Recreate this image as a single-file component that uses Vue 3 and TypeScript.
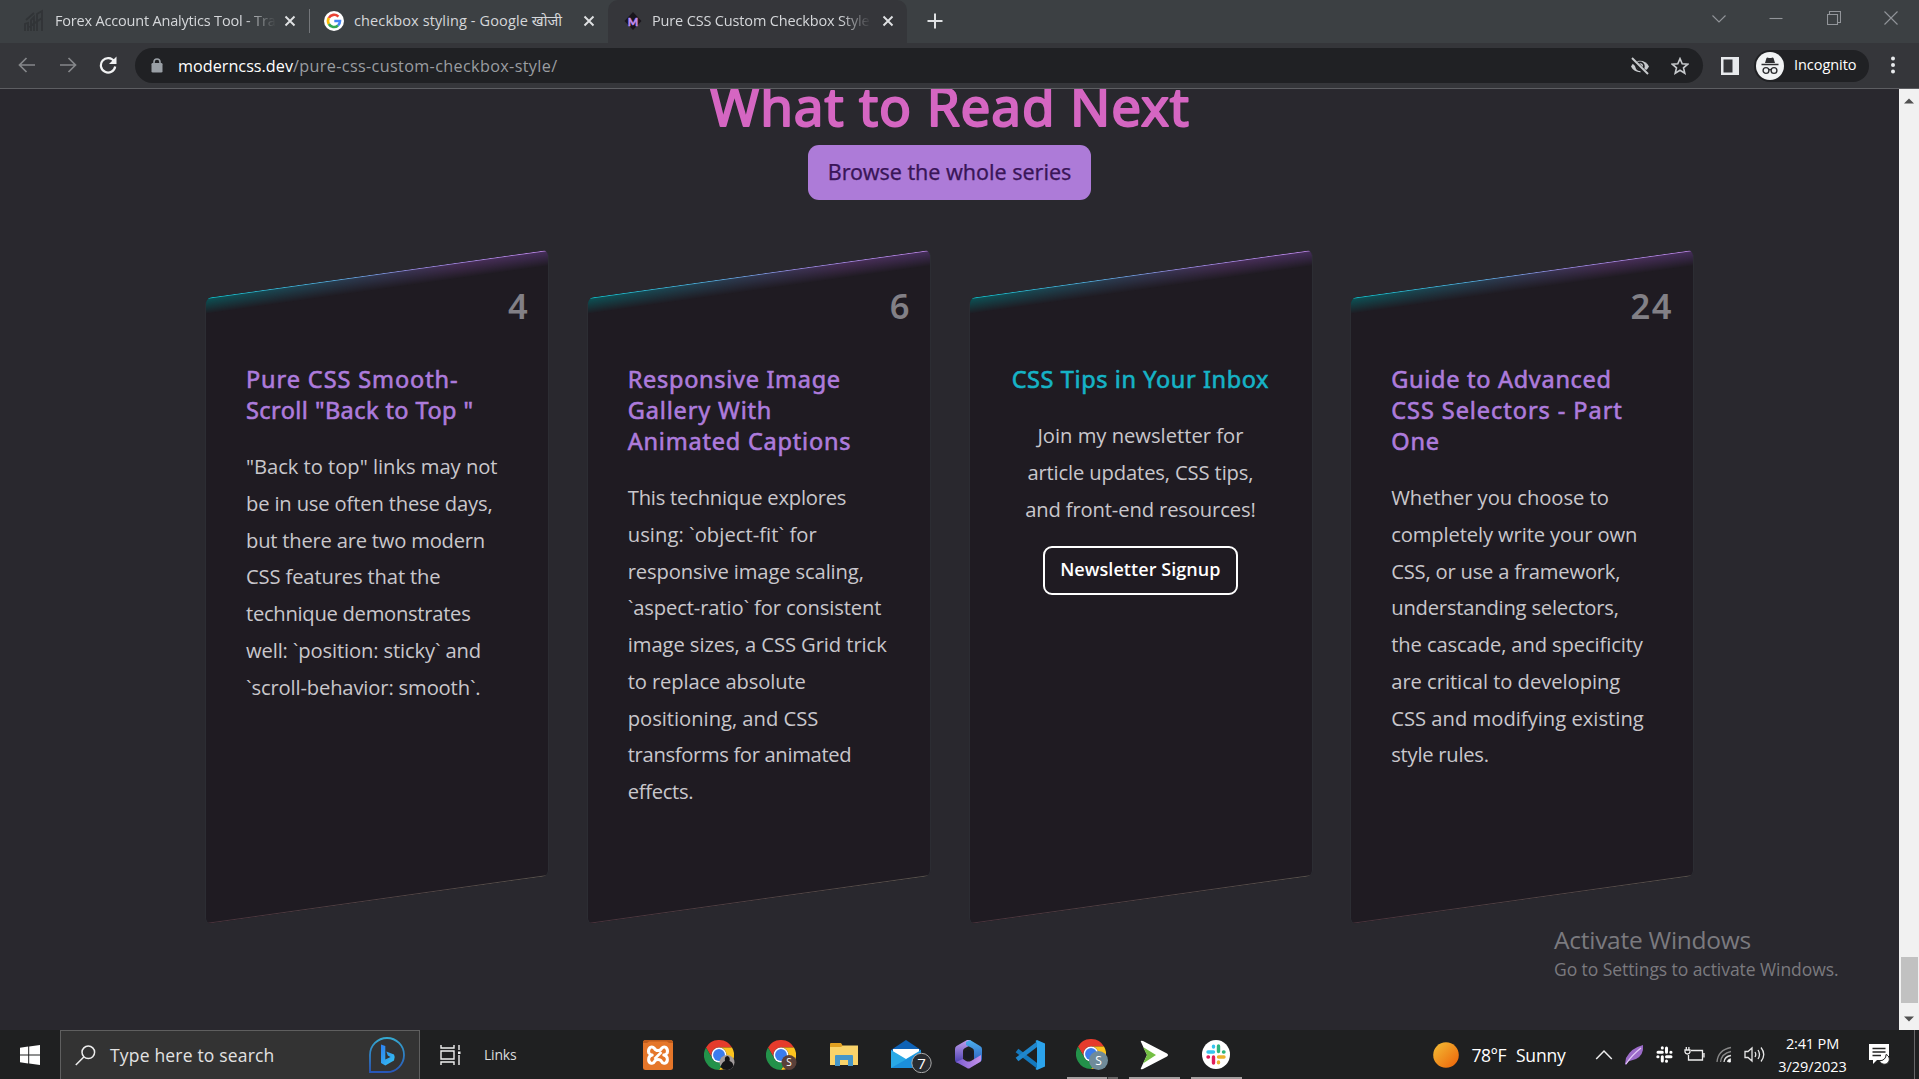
<script setup lang="ts">
interface Line { t: string; w: number }
interface Card { num?: string; numW?: number; title: Line[]; body: Line[]; promo?: boolean }

// Tracks a single line of text so that it spans the requested number of pixels.
const vFit = {
  mounted(el: HTMLElement, binding: { value: number }) {
    const count = (el.textContent || '').trim().length
    const natural = el.getBoundingClientRect().width
    if (count > 1) el.style.letterSpacing = ((binding.value + 1.5 - natural) / count).toFixed(3) + 'px'
  },
}

const cards: Card[] = [
  {
    num: '4', numW: 22,
    title: [{ t: 'Pure CSS Smooth-', w: 211 }, { t: 'Scroll "Back to Top "', w: 226 }],
    body: [
      { t: '"Back to top" links may not', w: 250 }, { t: 'be in use often these days,', w: 245 },
      { t: 'but there are two modern', w: 237.5 }, { t: 'CSS features that the', w: 193 },
      { t: 'technique demonstrates', w: 223 }, { t: 'well: `position: sticky` and', w: 233.5 },
      { t: '`scroll-behavior: smooth`.', w: 233 },
    ],
  },
  {
    num: '6', numW: 22,
    title: [{ t: 'Responsive Image', w: 211.5 }, { t: 'Gallery With', w: 143 }, { t: 'Animated Captions', w: 222 }],
    body: [
      { t: 'This technique explores', w: 217 }, { t: 'using: `object-fit` for', w: 187.5 },
      { t: 'responsive image scaling,', w: 234.5 }, { t: '`aspect-ratio` for consistent', w: 252 },
      { t: 'image sizes, a CSS Grid trick', w: 257.5 }, { t: 'to replace absolute', w: 176.5 },
      { t: 'positioning, and CSS', w: 189 }, { t: 'transforms for animated', w: 222 }, { t: 'effects.', w: 64 },
    ],
  },
  {
    promo: true,
    title: [{ t: 'CSS Tips in Your Inbox', w: 256 }],
    body: [
      { t: 'Join my newsletter for', w: 204.5 }, { t: 'article updates, CSS tips,', w: 224.5 },
      { t: 'and front-end resources!', w: 229 },
    ],
  },
  {
    num: '24', numW: 41,
    title: [{ t: 'Guide to Advanced', w: 219 }, { t: 'CSS Selectors - Part', w: 230 }, { t: 'One', w: 47 }],
    body: [
      { t: 'Whether you choose to', w: 216 }, { t: 'completely write your own', w: 244.5 },
      { t: 'CSS, or use a framework,', w: 227.5 }, { t: 'understanding selectors,', w: 226 },
      { t: 'the cascade, and specificity', w: 250 }, { t: 'are critical to developing', w: 227.5 },
      { t: 'CSS and modifying existing', w: 251 }, { t: 'style rules.', w: 96 },
    ],
  },
]
</script>

<template>
  <div class="screen">
    <svg class="defs" width="0" height="0">
      <defs>
        <symbol id="chrome" viewBox="0 0 48 48">
          <path fill="#e53b2c" d="M24 12H44.8A24 24 0 0 0 3.2 12L13.6 30A12 12 0 0 1 24 12Z" />
          <path fill="#fcc31e" d="M34.4 30L24 48A24 24 0 0 0 44.8 12H24A12 12 0 0 1 34.4 30Z" />
          <path fill="#23924a" d="M13.6 30L3.2 12A24 24 0 0 0 24 48L34.4 30A12 12 0 0 1 13.6 30Z" />
          <circle cx="24" cy="24" r="12" fill="#fff" /><circle cx="24" cy="24" r="9.5" fill="#3a7cec" />
        </symbol>
        <symbol id="cross" viewBox="0 0 12 12"><path d="M1.5 1.5L10.5 10.5M10.5 1.5L1.5 10.5" stroke="#dfe1e3" stroke-width="1.9" fill="none" /></symbol>
        <linearGradient id="bing" x1="0" y1="0" x2="0" y2="1"><stop offset="0" stop-color="#35a8cf" /><stop offset="1" stop-color="#2856b8" /></linearGradient>
        <linearGradient id="bingb" x1="0" y1="0" x2="1" y2="1"><stop offset="0" stop-color="#2d7ff0" /><stop offset="1" stop-color="#35c5f0" /></linearGradient>
        <linearGradient id="sun" x1="0" y1="0" x2="1" y2="1"><stop offset="0.1" stop-color="#f2b632" /><stop offset="0.9" stop-color="#ee6a0c" /></linearGradient>
        <linearGradient id="m1" x1="0" y1="0" x2="0" y2="1"><stop offset="0" stop-color="#c3a0ee" /><stop offset="1" stop-color="#4a3fb0" /></linearGradient>
        <linearGradient id="m2" x1="0" y1="0" x2="0" y2="1"><stop offset="0" stop-color="#4bb0ee" /><stop offset="1" stop-color="#2c55b8" /></linearGradient>
        <linearGradient id="m3" x1="0" y1="0" x2="1" y2="0"><stop offset="0" stop-color="#7a5cd0" /><stop offset="1" stop-color="#c692ea" /></linearGradient>
      </defs>
    </svg>

    <header class="tabs">
      <div class="tab first">
        <svg class="fav1" width="20" height="24" viewBox="0 0 20 24"><path d="M1 22V15L4 14V22M7 22V11L10 8V22M13 22V5L18 2V22M2 11L10 4M5 18L18 9" stroke="#313437" stroke-width="1.800" fill="none" /></svg>
        <div class="label fade1"><span v-fit="219" class="fit">Forex Account Analytics Tool - Tra</span></div>
        <svg width="12" height="12" class="x"><use href="#cross" /></svg>
      </div>
      <i class="sep"></i>
      <div class="tab second">
        <svg width="20" height="20" viewBox="0 0 20 20"><circle cx="10" cy="10" r="10" fill="#fff" />
          <g fill="none" stroke-width="2.6"><path d="M14.4 5.6A6 6 0 0 0 4.8 7" stroke="#ea4335" /><path d="M4.8 7A6 6 0 0 0 4.8 13" stroke="#fbbc05" /><path d="M4.8 13A6 6 0 0 0 14 14.5" stroke="#34a853" /><path d="M14 14.5A6 6 0 0 0 16 10H10.3" stroke="#4285f4" /></g></svg>
        <div class="label l2"><span v-fit="207" class="fit">checkbox styling - Google खोजी</span></div>
        <svg width="12" height="12" class="x"><use href="#cross" /></svg>
      </div>
      <div class="tab active">
        <div class="mfav"><svg width="18" height="20" viewBox="0 0 18 20"><path d="M9 1L17.5 10L9 19L.5 10Z" fill="#18151c" /></svg><b>M</b></div>
        <div class="label fade3"><span v-fit="216" class="fit">Pure CSS Custom Checkbox Style</span></div>
        <svg width="12" height="12" class="x"><use href="#cross" /></svg>
      </div>
      <svg class="plus" width="16" height="16" viewBox="0 0 16 16"><path d="M8 .5V15.5M.5 8H15.5" stroke="#dfe1e3" stroke-width="2" /></svg>
      <div class="winctl">
        <svg width="14" height="14" viewBox="0 0 14 14"><path d="M.5 4.500L7 11L13.5 4.500" /></svg>
        <svg width="14" height="14" viewBox="0 0 14 14"><path d="M.5 7.5H13.5" /></svg>
        <svg width="14" height="14" viewBox="0 0 14 14"><path d="M.5 3.5H10.5V13.5H.5ZM2.5 3.5V.5H13.5V11.5H10.5" /></svg>
        <svg width="14" height="14" viewBox="0 0 14 14"><path d="M.5 .5L13.5 13.5M13.5 .5L.5 13.5" /></svg>
      </div>
    </header>

    <div class="toolbar">
      <div class="nav">
        <svg width="18" height="16" viewBox="0 0 18 16"><path d="M17 8H2M8.5 1L1.5 8L8.5 15" stroke="#85878a" stroke-width="1.7" fill="none" /></svg>
        <svg width="18" height="16" viewBox="0 0 18 16"><path d="M1 8H16M9.5 1L16.5 8L9.5 15" stroke="#85878a" stroke-width="1.7" fill="none" /></svg>
        <svg width="18" height="18" viewBox="0 0 18 18"><path d="M15.2 5.5A7.2 7.2 0 1 0 16.2 10.5" stroke="#f1f2f3" stroke-width="2.2" fill="none" /><path d="M17.5 .5V8H10Z" fill="#f1f2f3" /></svg>
      </div>
      <div class="omnibox">
        <svg width="12" height="15" viewBox="0 0 12 15"><rect x=".5" y="5" width="11" height="9.5" rx="1.3" fill="#9aa0a6" /><path d="M3 6V4A3 3 0 0 1 9 4V6" stroke="#9aa0a6" stroke-width="1.6" fill="none" /></svg>
        <div class="url"><span v-fit="113.500" class="fit host">moderncss.dev</span><span v-fit="263" class="fit path">/pure-css-custom-checkbox-style/</span></div>
        <svg class="eye" width="20" height="20" viewBox="0 0 20 20"><path d="M1 10.5C4.5 2.8 15.5 2.8 19 10.5C15.500 18 4.500 18 1 10.500Z" fill="#c7cacd" /><circle cx="10" cy="10.300" r="3.900" fill="#c7cacd" stroke="#202124" stroke-width="1.700" /><path d="M1.700 3.200L17 18.500" stroke="#202124" stroke-width="5" /><path d="M2 2L18 18" stroke="#c7cacd" stroke-width="2" /></svg>
        <svg class="star" width="18" height="18" viewBox="0 0 18 18"><path d="M9 1.6L11.2 6.7L16.700 7.200L12.500 10.800L13.800 16.200L9 13.300L4.200 16.200L5.500 10.800L1.300 7.200L6.800 6.700Z" stroke="#c7cacd" stroke-width="1.6" fill="none" /></svg>
      </div>
      <svg class="panel" width="18" height="18" viewBox="0 0 18 18"><path fill="#e8eaed" fill-rule="evenodd" d="M0 0H18V18H0ZM2.500 2.500V15.500H11.500V2.500Z" /></svg>
      <div class="incog">
        <svg width="28" height="28" viewBox="0 0 28 28"><circle cx="14" cy="14" r="14" fill="#f1f3f4" /><path d="M9 11L10.500 6Q11 5.300 12 5.700Q14 6.500 16 5.700Q17 5.300 17.500 6L19 11Z" fill="#2d2e31" /><path d="M5.500 12.500H22.500" stroke="#2d2e31" stroke-width="1.500" /><g fill="none" stroke="#2d2e31" stroke-width="1.400"><circle cx="10" cy="18.500" r="2.900" /><circle cx="18" cy="18.500" r="2.900" /><path d="M12.800 18Q14 17 15.200 18" /></g></svg>
        <span v-fit="61" class="fit">Incognito</span>
      </div>
      <svg class="dots" width="6" height="18" viewBox="0 0 6 18" fill="#e8eaed"><circle cx="3" cy="2.500" r="2" /><circle cx="3" cy="9" r="2" /><circle cx="3" cy="15.500" r="2" /></svg>
    </div>

    <div class="viewport">
      <main class="page">
        <svg class="headline" width="500" height="56" viewBox="0 0 500 56">
          <text x="10" y="37" textLength="479" lengthAdjust="spacing">What to Read Next</text>
        </svg>
        <div class="browse"><span v-fit="242" class="fit">Browse the whole series</span></div>
        <section class="cards">
          <article v-for="(c, i) in cards" :key="i" class="card" :class="{ promo: c.promo }">
            <div class="shape"></div>
            <div v-if="c.num" class="num"><span v-fit="c.numW" class="fit">{{ c.num }}</span></div>
            <div class="content">
              <h3><span v-for="l in c.title" :key="l.t" v-fit="l.w" class="fit">{{ l.t }}</span></h3>
              <p><span v-for="l in c.body" :key="l.t" v-fit="l.w" class="fit">{{ l.t }}</span></p>
              <div v-if="c.promo" class="signup"><span v-fit="159" class="fit">Newsletter Signup</span></div>
            </div>
          </article>
        </section>
        <div class="activate">
          <div v-fit="195.500" class="fit a1">Activate Windows</div>
          <div v-fit="283" class="fit a2">Go to Settings to activate Windows.</div>
        </div>
      </main>
      <div class="scroll">
        <svg width="10" height="6" viewBox="0 0 10 6"><path d="M0 5.500L5 .5L10 5.500Z" fill="#505050" /></svg>
        <div class="thumb"></div>
        <svg width="10" height="6" viewBox="0 0 10 6"><path d="M0 .5L5 5.500L10 .5Z" fill="#505050" /></svg>
      </div>
    </div>

    <footer class="taskbar">
      <div class="start"><svg width="20" height="20" viewBox="0 0 20 20" fill="#fff"><path d="M0 2.800L8.200 1.600V9.500H0ZM9.200 1.500L20 0V9.500H9.200ZM0 10.500H8.200V18.400L0 17.200ZM9.200 10.500H20V20L9.200 18.500Z" /></svg></div>
      <div class="search">
        <svg width="21" height="21" viewBox="0 0 21 21"><circle cx="13.300" cy="7.300" r="6.300" stroke="#eee" stroke-width="1.500" fill="none" /><path d="M8.800 12L.8 20" stroke="#eee" stroke-width="1.500" /></svg>
        <span v-fit="163" class="fit">Type here to search</span>
        <svg class="bing" width="36" height="36" viewBox="0 0 36 36"><path d="M1 35V18A17 17 0 1 1 18 35Z" fill="none" stroke="url(#bing)" stroke-width="1.800" /><path d="M12 7.500L16.300 9V22.500L21.500 20L18.800 18.500L17.300 14.500L25 17.500Q26.500 20 25 23.500L16.300 28.500L12 26Z" fill="url(#bingb)" /></svg>
      </div>
      <svg class="view" width="22" height="22" viewBox="0 0 22 22" fill="none" stroke="#f1f1f1" stroke-width="1.400"><path d="M1 1V4H14V1M1 7H14V15H1ZM1 21V18H14V21M19 1V6M19 11V21" /><rect x="18" y="7.500" width="2.500" height="2.500" fill="#f1f1f1" stroke="none" /></svg>
      <span v-fit="31" class="fit links">Links</span>
      <div class="apps">
        <div class="app"><svg width="30" height="30" viewBox="0 0 30 30"><rect width="30" height="30" rx="2.500" fill="#e5762a" /><path d="M0 3Q0 0 3 0H27Q30 0 30 3H26L24 1.500H6L4 3Z" fill="#c05c1c" /><path d="M15 10.500Q12.500 10.500 11.500 8.500Q9.500 6 7 7.500Q4.800 10 5.800 13Q7 14.800 9.200 15Q6.500 15.500 5.800 18Q5 22 7.500 23Q10.500 24 11.500 21.500Q12.500 19.500 15 19.500Q17.500 19.500 18.500 21.500Q19.500 24 22.500 23Q25 22 24.200 18Q23.500 15.500 20.800 15Q23 14.800 24.200 13Q25.200 10 23 7.500Q20.500 6 18.500 8.500Q17.500 10.500 15 10.500Z" fill="none" stroke="#fff" stroke-width="3" stroke-linejoin="round" /><path d="M11.500 19L18.500 12" stroke="#fff" stroke-width="2.500" /></svg></div>
        <div class="app"><svg width="32" height="30" viewBox="0 0 32 30"><svg width="30" height="30"><use href="#chrome" /></svg><circle cx="23" cy="22.500" r="7.500" fill="#a39c9c" /><path d="M16.500 27Q18 22 21 21Q20 16.500 23.500 16Q26.500 17 25.500 21Q29 22 29.500 26Q27 30 23 30Q19 30 16.500 27Z" fill="#151518" /></svg></div>
        <div class="app"><svg width="32" height="30" viewBox="0 0 32 30"><svg width="30" height="30"><use href="#chrome" /></svg><circle cx="23" cy="22.500" r="7.500" fill="#5a4039" /><text x="23" y="26" class="badge" font-size="10">S</text></svg></div>
        <div class="app"><svg width="28" height="25" viewBox="0 0 28 25"><path d="M0 2Q0 1 1 1H11L13 4H27Q28 4 28 5V23H0Z" fill="#e0a021" /><path d="M0 5H11L13 3.500H28V23H0Z" fill="#f9d36a" /><path d="M5 24V14Q5 13 6 13H22Q23 13 23 14V24H18V18H10V24Z" fill="#4596c9" /></svg></div>
        <div class="app"><svg width="42" height="34" viewBox="0 0 42 34" class="mail"><path d="M0 11L15 1L30 11V20H0Z" fill="#0f62b5" /><path d="M2 10H28V19L15 25L2 19Z" fill="#fff" /><path d="M0 11L15 20L30 11V29H0Z" fill="#29a9e6" /><path d="M0 29L30 12V29Z" fill="#1b8fdb" /><circle cx="30.500" cy="24" r="9.700" fill="#292c30" stroke="#a8a8a8" /><text x="30.500" y="29.500" class="badge" font-size="15">7</text></svg></div>
        <div class="app"><svg width="27" height="29" viewBox="0 0 27 29"><path d="M12 0L1.500 6Q0 7 0 9V20Q0 22 2 23L8 20V11Q8 9 10 8L16 5V1Q14-1 12 0Z" fill="url(#m1)" /><path d="M15 0L25 6Q27 7 27 9V19Q27 21 25 22L19 25V11Q19 9 17 8L11 5V2Z" fill="url(#m2)" /><path d="M1 22L8 19L11 21Q13.500 22 16 21L26 15V20Q26.500 21 25 22L15 28Q13.500 29 12 28Z" fill="url(#m3)" /><path d="M13.500 9.500L18 12V17L13.500 19.500L9 17V12Z" fill="#191b24" /></svg></div>
        <div class="app"><svg width="30" height="30" viewBox="0 0 30 30"><path d="M2 10.500L23 26.500" stroke="#1478bd" stroke-width="4.500" /><path d="M2 19.500L23 3.500" stroke="#1f86cc" stroke-width="4.500" /><path d="M22 0L30 3.500V26.500L22 30L20.500 29L22 27V3L20.500 1Z" fill="#2ba3ec" /></svg></div>
        <div class="app on split"><svg width="32" height="31" viewBox="0 0 32 31"><svg width="30" height="30"><use href="#chrome" /></svg><circle cx="22.500" cy="21.500" r="9.500" fill="#6f8b9a" /><text x="22.500" y="26" class="badge" font-size="12">S</text></svg></div>
        <div class="app on"><svg width="28" height="30" viewBox="0 0 28 30"><path d="M1 2Q0 0 3 1L27 13.500Q29 15 27 16.500L3 29Q0 30 1 28L7 15Z" fill="#fff" /><path d="M3 7L16 15L3 23.500L7 15Z" fill="#74c044" /></svg></div>
        <div class="app on"><svg width="28" height="29" viewBox="0 0 28 29"><ellipse cx="14" cy="14.500" rx="14" ry="14.500" fill="#fff" /><g stroke-width="3.400" stroke-linecap="round" fill="none"><path d="M6 12H11.500M11.500 6.200V7" stroke="#36c5f0" /><path d="M16.500 6V11.500M22 12H21.500" stroke="#2eb67d" /><path d="M22 17H16.500M16.500 22.700V22" stroke="#ecb22e" /><path d="M11.500 23V17M6 17H6.500" stroke="#e01e5a" /></g></svg></div>
      </div>
      <div class="tray">
        <svg width="26" height="26" viewBox="0 0 26 26"><circle cx="13" cy="13" r="12.800" fill="url(#sun)" /></svg>
        <span v-fit="33" class="fit temp">78°F</span><span v-fit="48" class="fit sunny">Sunny</span>
        <div class="slot s1"><svg width="18" height="11" viewBox="0 0 18 11"><path d="M1.200 10L9 2L16.800 10" stroke="#eee" stroke-width="1.500" fill="none" /></svg></div>
        <div class="slot"><svg width="20" height="22" viewBox="0 0 20 22"><path d="M1 20L2 14Q7 4 19 1Q20 11 12 15L4 17.500L2 21Z" fill="#9c6bc9" /><path d="M2 20Q8 11 17 4" stroke="#e2c9f6" stroke-width="1.200" fill="none" /></svg></div>
        <div class="slot"><svg width="17" height="17" viewBox="0 0 17 17"><g stroke="#fff" stroke-width="3" stroke-linecap="round"><path d="M2 6.300H6.300M6.300 1.800V2M10.500 2V6.300M15 6.300H14.800M15 10.700H10.500M10.500 15.200V15M6.300 15V10.700M1.800 10.700H2" /></g></svg></div>
        <div class="slot"><svg width="21" height="15" viewBox="0 0 21 15" fill="none" stroke="#eee" stroke-width="1.300"><path d="M7 3.500H18.500V13H4.500V8M20 6V10.500M1 3H6V5Q5.500 7 3.500 7Q1.500 7 1 5ZM2.300 0V3M4.900 0V3" /></svg></div>
        <div class="slot"><svg width="16" height="17" viewBox="0 0 16 17" fill="none" stroke-width="1.300"><path d="M1 16Q2 4 15 1.500M4.500 16Q5.500 7.500 15 5.500" stroke="#888" /><path d="M8 16Q8.500 10.500 15 9.500" stroke="#ddd" /><path d="M11.500 16Q12 13.500 15 13" stroke="#ddd" /><circle cx="13.500" cy="15" r="1.500" fill="#fff" /></svg></div>
        <div class="slot"><svg width="21" height="17" viewBox="0 0 21 17" fill="none" stroke="#e7e7e7" stroke-width="1.300"><path d="M1 5.500H4L8 2V15L4 11.500H1ZM11 6Q12.500 8.500 11 11M14 4Q17 8.500 14 13M17 1.500Q22.500 8.500 17 15.500" /></svg></div>
        <div class="clock"><span v-fit="51.500" class="fit">2:41 PM</span><span v-fit="67" class="fit">3/29/2023</span></div>
        <svg class="note" width="21" height="22" viewBox="0 0 21 22"><path d="M0 0H20V16H8L4 20V16H0Z" fill="#fff" /><path d="M3.500 4.500H16.500M3.500 8H16.500M3.500 11.500H12" stroke="#252525" stroke-width="1.300" /><path d="M17 10.500A5 5 0 1 1 10.500 16.500A5.500 5.500 0 0 0 17 10.500Z" fill="#fff" stroke="#252525" /></svg>
        <i class="desk"></i>
      </div>
    </footer>
  </div>
</template>

<style>
body { overflow: hidden; background: #29282e; }
</style>
<style scoped>
.screen { width: 1919px; height: 1079px; display: flex; flex-direction: column; overflow: hidden; font-family: "Open Sans", "Noto Sans", sans-serif; color: #fff; }
.screen *, .screen { box-sizing: border-box; }
.defs { position: absolute; }
svg { display: block; flex: none; }
.fit { display: block; width: max-content; white-space: nowrap; flex: none; }

.tabs { height: 43px; flex: none; display: flex; background: #3c4043; font-size: 14.500px; color: #d5d7da; }
.tab { display: flex; align-items: center; height: 43px; flex: none; }
.tab .label { height: 26px; line-height: 26px; overflow: hidden; margin-top: -2px; }
.first { width: 309px; padding-left: 24px; }
.first .fade1 { width: 221px; margin-left: 11px; }
.fade1, .fade3 { -webkit-mask-image: linear-gradient(to right, #000 86%, transparent); mask-image: linear-gradient(to right, #000 86%, transparent); }
.first .x { margin-left: 8px; }
.sep { width: 1px; height: 24px; margin-top: 9px; background: #73767a; }
.second { width: 298px; padding-left: 14px; }
.second .l2 { width: 212px; margin-left: 10px; }
.second .x { margin-left: 17px; }
.active { width: 299px; background: #35363a; border-radius: 10px 10px 0 0; padding-left: 16px; }
.active .fade3 { width: 219px; margin-left: 10px; }
.active .x { margin-left: 11px; }
.mfav { display: grid; place-items: center; }
.mfav > * { grid-area: 1 / 1; }
.mfav b { font: 900 11px "Lato", sans-serif; color: #c08aee; position: relative; -webkit-text-stroke: .4px #c08aee; }
.tab .x, .tab > svg, .mfav { margin-top: -1px; }
.plus { margin: 13px 0 0 20px; }
.winctl { margin: 11px 21px 0 auto; display: flex; gap: 43.500px; }
.winctl svg { fill: none; stroke: #92959a; stroke-width: 1.100; }

.toolbar { height: 46px; flex: none; background: #35363a; border-bottom: 1px solid #5d5e62; display: flex; align-items: center; }
.nav { width: 135px; padding-left: 18px; display: flex; align-items: center; gap: 23px; margin-top: -1px; }
.nav svg:last-child { margin-left: -1.500px; }
.omnibox { width: 1568px; height: 35px; border-radius: 18px; background: #202124; display: flex; align-items: center; padding-left: 16px; }
.url { display: flex; margin-left: 15px; font-size: 16.200px; line-height: 30px; }
.path { color: #9a9da1; }
.eye { margin-left: auto; }
.star { margin: 0 14px 0 21px; }
.panel { margin-left: 18px; }
.incog { margin-left: 15px; width: 115px; height: 32px; border-radius: 16px; background: #202124; display: flex; align-items: center; padding-left: 2px; gap: 10px; font-size: 14.500px; line-height: 18px; }
.incog span { margin-top: -2px; }
.dots { margin-left: 20.500px; margin-top: -1px; }

.viewport { flex: 1; min-height: 0; display: flex; background: #29282e; }
.page { flex: 1; min-width: 0; display: flex; flex-direction: column; align-items: center; position: relative; overflow: hidden; }
.headline { font-size: 53px; }
.headline text { fill: #d566c2; stroke: #d566c2; stroke-width: 2; stroke-linejoin: round; font-family: "Noto Sans", "Open Sans", sans-serif; font-weight: 400; }
.browse { width: 283px; height: 55px; flex: none; border-radius: 11px; background: #ad7bd8; color: #3a1658; font-family: "Noto Sans", "Open Sans", sans-serif; font-size: 21.500px; -webkit-text-stroke: .25px #3a1658; display: flex; justify-content: center; line-height: 54px; }
.cards { margin-top: 74px; width: 1487px; height: 625px; display: grid; grid-template-columns: repeat(4, 1fr); column-gap: 40px; }
.card { position: relative; }
.shape { position: absolute; inset: 0 -1.250px -1px -1px; transform: skewY(-8deg); border-radius: 6px; background: #1f1b22; border-left: 1px solid #2c2d33; border-right: 1px solid #2c2d33; overflow: hidden; }
.shape::before { content: ""; position: absolute; left: 0; right: 0; top: 0; height: 16px; background: linear-gradient(to right, #0a5558, #2f3b52 45%, #4a2f59 75%, #48305f); -webkit-mask-image: linear-gradient(#000, transparent); mask-image: linear-gradient(#000, transparent); }
.shape::after { content: ""; position: absolute; inset: 0; background: linear-gradient(to right, #12b5bd, #55a3d3 38%, #8f84d4 60%, #b582dc) top / 100% 1.300px no-repeat, linear-gradient(to right, #4a333c, #57524c) bottom / 100% 1px no-repeat; }
.num { position: absolute; top: 14.500px; right: 20px; font-family: "Noto Sans", "Open Sans", sans-serif; font-size: 34.500px; line-height: 34px; font-weight: 600; color: #828086; }
.content { position: relative; padding: 90px 0 0 40px; }
h3 { margin: 0 0 22px; font-family: "Noto Sans", "Open Sans", sans-serif; font-size: 23.500px; line-height: 31px; font-weight: 400; color: #ad7bdc; -webkit-text-stroke: .6px currentColor; }
p { margin: 0; font-size: 20.200px; line-height: 36.750px; color: #c9c7cc; }
.promo .content { padding-left: 0; display: flex; flex-direction: column; align-items: center; }
.promo h3 { color: #16b3c6; }
.promo .fit { margin: 0 auto; }
.signup { margin-top: 19px; width: 195px; height: 49px; border: 2px solid #fff; border-radius: 9px; font-size: 18px; font-weight: 600; line-height: 43px; display: flex; }
.activate { position: absolute; left: 1554px; top: 835px; color: #7b7a7f; }
.a1 { font-size: 24.500px; line-height: 32px; font-weight: 400; }
.a2 { font-size: 17.500px; line-height: 27px; }
.scroll { width: 20px; background: #f1f1f1; display: flex; flex-direction: column; align-items: center; padding: 9px 0 8px; }
.thumb { width: 17px; height: 46px; margin: auto 0 13px; background: #c1c1c1; }

.taskbar { height: 49px; flex: none; background: #1f2021; display: flex; align-items: center; }
.start { width: 60px; padding-left: 20px; }
.search { width: 360px; height: 49px; background: #333; border: 1px solid #5f5f5f; border-bottom: 0; display: flex; align-items: center; padding-left: 14px; font-size: 17.500px; color: #e2e2e2; gap: 14px; }
.search .bing { margin: 0 14px 0 auto; }
.view { margin-left: 20px; }
.links { margin-left: 22px; font-size: 14px; color: #ddd; }
.apps { display: flex; margin-left: 110.500px; height: 49px; }
.app { width: 62px; height: 49px; display: flex; align-items: center; justify-content: center; }
.mail { margin-left: 11px; margin-top: 3px; }
.badge { text-anchor: middle; fill: #fff; font-family: "Open Sans", sans-serif; }
.on { background: linear-gradient(#a39f9f, #a39f9f) center bottom / 51px 2px no-repeat; }
.split { background: linear-gradient(to right, #a39f9f 40px, #303030 40px, #303030 41px, #696767 41px) center bottom / 51px 2px no-repeat; }
.tray { margin-left: auto; height: 49px; display: flex; align-items: center; }
.temp { margin-left: 12px; font-size: 17.500px; }
.sunny { margin-left: 10px; font-size: 17.500px; }
.slot { width: 30px; display: flex; justify-content: center; }
.s1 { margin-left: 23.500px; }
.clock { width: 87px; display: flex; flex-direction: column; align-items: center; font-size: 14.500px; line-height: 23px; }
.note { margin-left: 13px; }
.desk { width: 1px; height: 49px; background: #68686a; margin: 0 4px 0 24px; }
</style>
